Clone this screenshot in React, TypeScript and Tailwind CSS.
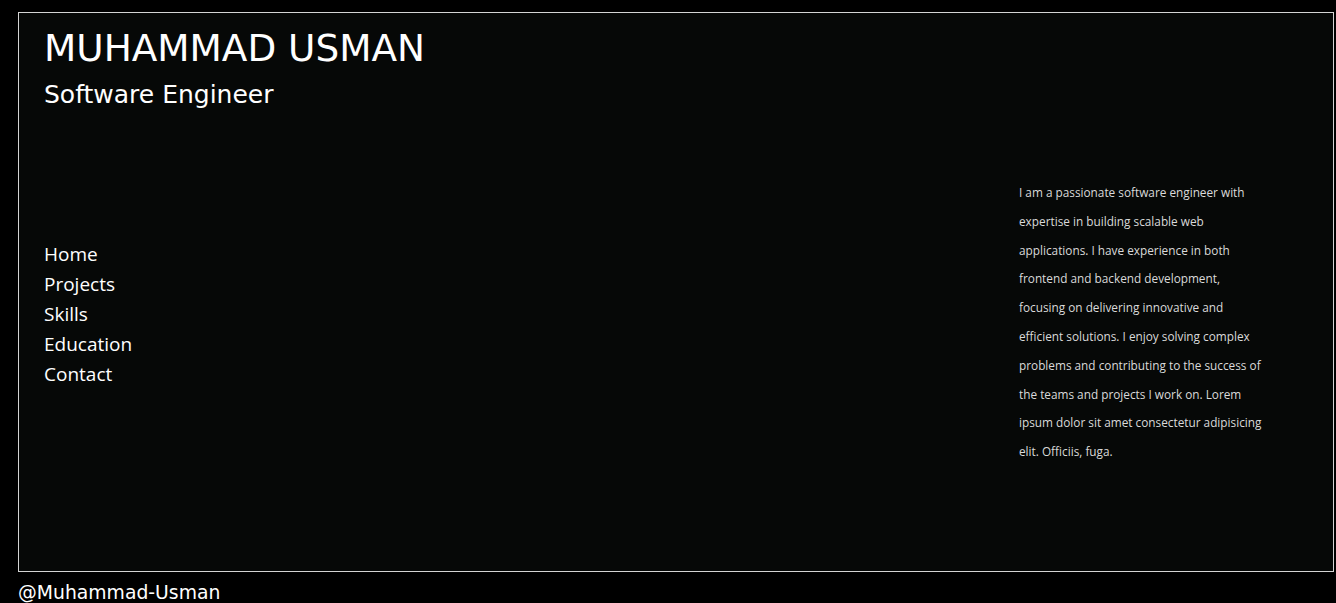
import React from "react";

const lines = [
  "I am a passionate software engineer with",
  "expertise in building scalable web",
  "applications. I have experience in both",
  "frontend and backend development,",
  "focusing on delivering innovative and",
  "efficient solutions. I enjoy solving complex",
  "problems and contributing to the success of",
  "the teams and projects I work on. Lorem",
  "ipsum dolor sit amet consectetur adipisicing",
  "elit. Officiis, fuga.",
];

const nav = ["Home", "Projects", "Skills", "Education", "Contact"];

export default function App() {
  return (
    <div className="bg-black h-[603px] overflow-hidden pt-[12px] pl-[18px] pr-[2px]">
      <div className="h-[560px] border border-[#d4d4d4] bg-[#060807] pl-[25px] pt-[14px] flex flex-col">
        <h1
          className="text-white text-[37.4px] leading-[43px] font-normal"
          style={{ fontFamily: '"DejaVu Sans", Verdana, sans-serif' }}
        >
          MUHAMMAD USMAN
        </h1>
        <h2
          className="text-white text-[25px] leading-[29px] font-normal mt-[10px]"
          style={{ fontFamily: '"DejaVu Sans", Verdana, sans-serif' }}
        >
          Software Engineer
        </h2>
        <div className="flex flex-row items-start">
          <nav
            className="mt-[130px] flex flex-col text-white text-[19px] leading-[30px]"
            style={{ fontFamily: '"Open Sans", "Noto Sans", sans-serif' }}
          >
            {nav.map((n) => (
              <a key={n} className="block">
                {n}
              </a>
            ))}
          </nav>
          <p
            className="ml-auto mr-[64px] w-[250px] mt-[69px] text-[#dadada] text-[11.8px] leading-[28.8px]"
            style={{ fontFamily: '"Open Sans", "Noto Sans", sans-serif' }}
          >
            {lines.map((l, i) => (
              <span key={i} className="block whitespace-nowrap">
                {l}
              </span>
            ))}
          </p>
        </div>
      </div>
      <div
        className="text-white text-[18.8px] leading-[22px] mt-[10px]"
        style={{ fontFamily: '"DejaVu Sans", Verdana, sans-serif' }}
      >
        @Muhammad-Usman
      </div>
    </div>
  );
}
